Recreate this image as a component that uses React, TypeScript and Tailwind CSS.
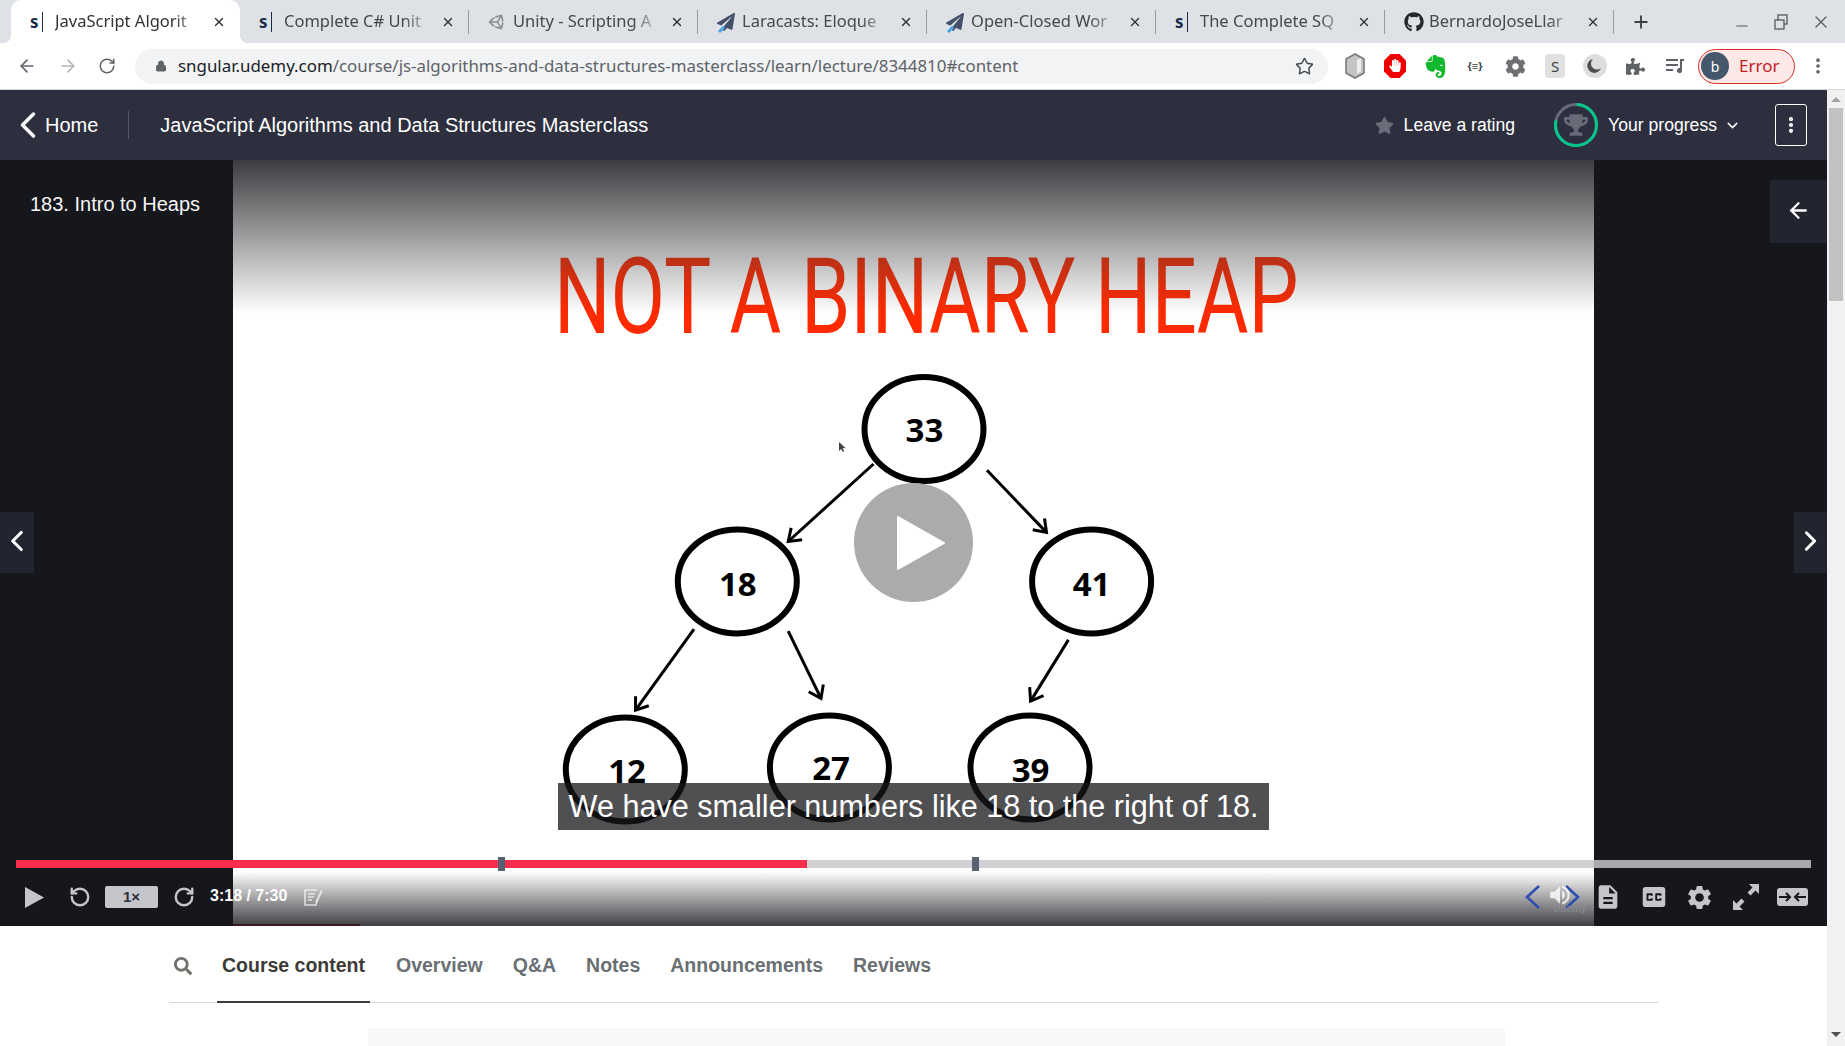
import React from 'react';
import { FaGithub, FaPaperPlane, FaStar, FaTrophy, FaHandPaper, FaCog, FaPuzzlePiece, FaSearch, FaUnity } from 'react-icons/fa';
import { SiEvernote } from 'react-icons/si';
import { MdClosedCaption, MdDescription, MdSettings, MdVolumeUp } from 'react-icons/md';
import { ArrowLeft, ArrowRight, ChevronDown, ChevronLeft, ChevronRight, Lock, Minus, MoreVertical, Plus, RotateCcw, RotateCw, Star, X } from 'lucide-react';

const UdemyFav = () => (
    <span className="flex items-center w-[16px] text-[#1c2b49] font-bold text-[17px] leading-none">
        s<span className="ml-[3px] h-[20px] w-[1px] bg-[#1c2b49]" />
    </span>
);

const Plane = () => (
    <span className="relative block w-[18px] h-[18px]">
        <FaPaperPlane className="w-[18px] h-[18px] text-[#44506a]" />
        <span className="absolute left-[1px] bottom-[0px] w-[7px] h-[3px] -rotate-45 bg-[#4aa3e8]" />
    </span>
);

const tabs = [
    { title: 'JavaScript Algorit', icon: <UdemyFav /> },
    { title: 'Complete C# Unit', icon: <UdemyFav /> },
    { title: 'Unity - Scripting A', icon: <FaUnity className="w-[18px] h-[18px] text-[#8b8d90]" /> },
    { title: 'Laracasts: Eloque', icon: <Plane /> },
    { title: 'Open-Closed Wor', icon: <Plane /> },
    { title: 'The Complete SQ', icon: <UdemyFav /> },
    { title: 'BernardoJoseLlar', icon: <FaGithub className="w-[20px] h-[20px] text-[#24292e]" /> },
];

const TabStrip = () => (
    <div className="flex h-[43px] shrink-0 items-stretch bg-[#dee1e6] pl-[11px] font-['Noto_Sans',sans-serif] text-[16.5px] text-[#45484d]">
        {tabs.map((tab, i) => (
            <div
                key={tab.title}
                className={`relative flex w-[229px] shrink-0 items-center pl-[19px] pr-[14px] ${i === 0 ? 'rounded-t-[10px] bg-white text-[#303236]' : ''}`}
            >
                <span className="flex w-[25px] shrink-0 items-center">{tab.icon}</span>
                <span className="min-w-0 flex-1 whitespace-nowrap [mask-image:linear-gradient(to_right,black_80%,transparent_100%)]">
                    {tab.title}
                </span>
                <X className="ml-[8px] h-[14px] w-[14px] shrink-0 text-[#303236]" strokeWidth={2.4} />
                {i !== 0 && <span className="absolute right-0 top-[10px] h-[24px] w-[1px] bg-[#9a9ca0]" />}
                {i === 0 && (
                    <>
                        <span className="absolute -left-[8px] bottom-0 h-[8px] w-[8px] bg-[radial-gradient(circle_at_0_0,transparent_8px,white_8px)]" />
                        <span className="absolute -right-[8px] bottom-0 h-[8px] w-[8px] bg-[radial-gradient(circle_at_100%_0,transparent_8px,white_8px)]" />
                    </>
                )}
            </div>
        ))}
        <div className="ml-[17px] flex items-center">
            <Plus className="h-[20px] w-[20px] text-[#3c3f43]" strokeWidth={2.2} />
        </div>
        <div className="ml-auto flex items-center gap-[21px] pr-[14px] text-[#55585c]">
            <Minus className="mt-[8px] h-[18px] w-[18px]" strokeWidth={1.6} />
            <svg width="18" height="18" viewBox="0 0 18 18" fill="none" stroke="currentColor" strokeWidth="1.3">
                <rect x="6" y="2" width="9" height="9" />
                <rect x="3" y="7" width="9" height="9" fill="#dee1e6" />
            </svg>
            <X className="h-[20px] w-[20px]" strokeWidth={1.5} />
        </div>
    </div>
);

const Toolbar = () => (
    <div className="flex h-[47px] shrink-0 items-center border-b border-[#d5d7da] bg-white font-['Noto_Sans',sans-serif]">
        <div className="flex w-[135px] shrink-0 items-center pl-[17px] text-[#5f6368]">
            <ArrowLeft className="h-[20px] w-[20px]" strokeWidth={2} />
            <ArrowRight className="ml-[21px] h-[20px] w-[20px] text-[#b4b7bb]" strokeWidth={2} />
            <RotateCw className="ml-[20px] h-[18px] w-[18px]" strokeWidth={2} />
        </div>
        <div className="flex h-[35px] w-[1193px] shrink-0 items-center rounded-full bg-[#f1f3f4] pl-[20px] pr-[14px] text-[16.9px]">
            <Lock className="h-[14px] w-[12px] shrink-0 text-[#5f6368]" fill="#5f6368" strokeWidth={2} />
            <span className="ml-[11px] flex-1 whitespace-nowrap text-[#5f6368]">
                <span className="text-[#202124]">sngular.udemy.com</span>/course/js-algorithms-and-data-structures-masterclass/learn/lecture/8344810#content
            </span>
            <Star className="h-[19px] w-[19px] shrink-0 text-[#45484c]" strokeWidth={1.8} />
        </div>
        <div className="ml-[7px] flex w-[360px] shrink-0 items-center">
            <span className="flex w-[40px] justify-center">
                <svg width="22" height="26" viewBox="0 0 22 26">
                    <path d="M11 1l9 5v14l-9 5-9-5V6z" fill="#c4c6c6" stroke="#77797b" strokeWidth="1.6" />
                    <path d="M13 7l4-2v13l-4 3z" fill="#eef0f0" />
                </svg>
            </span>
            <span className="relative flex w-[40px] justify-center">
                <svg width="22" height="24" viewBox="0 0 22 24">
                    <path d="M6.500 0h9L22 6.500v11L15.500 24h-9L0 17.500v-11z" fill="#ee0000" />
                </svg>
                <FaHandPaper className="absolute left-[14px] top-[5px] h-[13px] w-[12px] text-white" />
            </span>
            <span className="flex w-[40px] justify-center">
                <SiEvernote className="h-[23px] w-[23px] text-[#14b82e]" />
            </span>
            <span className="flex w-[40px] justify-center text-[11px] font-bold text-[#3c3f43]">{'{≡}'}</span>
            <span className="flex w-[40px] justify-center">
                <FaCog className="h-[21px] w-[21px] text-[#6d6f72]" />
            </span>
            <span className="flex w-[40px] justify-center">
                <span className="flex h-[24px] w-[20px] items-center justify-center rounded-[4px] bg-[#dfe0e0] text-[15px] text-[#3f4144]">S</span>
            </span>
            <span className="flex w-[40px] justify-center">
                <svg width="24" height="24" viewBox="0 0 24 24">
                    <circle cx="12" cy="12" r="12" fill="#dcdddd" />
                    <path d="M10 5a7 7 0 1 0 8 9 6 6 0 0 1-8-9z" fill="#4a4c50" />
                </svg>
            </span>
            <span className="flex w-[40px] justify-center">
                <FaPuzzlePiece className="h-[19px] w-[19px] text-[#5f6368]" />
            </span>
            <span className="flex w-[40px] justify-center">
                <svg width="20" height="18" viewBox="0 0 20 18" fill="#5f6368">
                    <rect x="1" y="2" width="12" height="2" />
                    <rect x="1" y="7" width="12" height="2" />
                    <rect x="1" y="12" width="7" height="2" />
                    <path d="M15 2h4v2h-2v9.5a2.5 2.5 0 1 1-2-2.4z" />
                </svg>
            </span>
        </div>
        <div className="ml-[3px] flex h-[35px] w-[97px] shrink-0 items-center rounded-full border border-[#d93025] bg-[#fce8e6] pl-[2px]">
            <span className="flex h-[28px] w-[28px] items-center justify-center rounded-full bg-[#45586b] text-[14px] text-white">b</span>
            <span className="ml-[10px] text-[17px] text-[#c5221f]">Error</span>
        </div>
        <MoreVertical className="ml-[13px] h-[20px] w-[20px] text-[#5f6368]" strokeWidth={2.4} />
    </div>
);

const CourseHeader = () => (
    <div className="flex h-[70px] shrink-0 items-center bg-[#2d2f3e] font-['Liberation_Sans',sans-serif] text-white">
        <ChevronLeft className="ml-[6px] h-[44px] w-[44px] shrink-0" strokeWidth={1.9} />
        <span className="-ml-[5px] text-[20px]">Home</span>
        <span className="ml-[30px] h-[28px] w-[1px] bg-[#555766]" />
        <span className="ml-[31px] text-[20px]">JavaScript Algorithms and Data Structures Masterclass</span>
        <div className="ml-auto flex items-center pr-[20px]">
            <FaStar className="h-[19px] w-[19px] text-[#6a6c79]" />
            <span className="ml-[10px] text-[17.6px]">Leave a rating</span>
            <span className="relative ml-[39px] flex h-[44px] w-[44px] items-center justify-center">
                <svg width="44" height="44" viewBox="0 0 44 44" className="absolute inset-0">
                    <circle cx="22" cy="22" r="20.5" fill="none" stroke="#686a78" strokeWidth="3" />
                    <circle cx="22" cy="22" r="20.5" fill="none" stroke="#00c68a" strokeWidth="3" strokeDasharray="100 129" transform="rotate(-88 22 22)" />
                </svg>
                <FaTrophy className="h-[22px] w-[24px] text-[#686a78]" />
            </span>
            <span className="ml-[10px] text-[17.6px]">Your progress</span>
            <ChevronDown className="ml-[7px] h-[17px] w-[17px]" strokeWidth={2} />
            <span className="ml-[34px] flex h-[42px] w-[32px] items-center justify-center rounded-[3px] border border-white">
                <MoreVertical className="h-[20px] w-[20px]" strokeWidth={3} />
            </span>
        </div>
    </div>
);

const nodes = [
    { cx: 924, cy: 429, lx: 924.4, ly: 430.4, label: '33' },
    { cx: 737.3, cy: 581.4, lx: 737.8, ly: 584.5, label: '18' },
    { cx: 1091.6, cy: 581.4, lx: 1091.6, ly: 584.5, label: '41' },
    { cx: 625.3, cy: 769.5, lx: 627, ly: 771.5, label: '12' },
    { cx: 829.4, cy: 767.5, lx: 831, ly: 768.7, label: '27' },
    { cx: 1030, cy: 767.5, lx: 1030.5, ly: 770.7, label: '39' },
];

const arrows = [
    [873.5, 464, 788.2, 541.5],
    [987, 470.3, 1046.5, 532.4],
    [694, 629.2, 635.5, 710.2],
    [788.2, 631.2, 821, 698.4],
    [1068.4, 639.9, 1030.6, 701.1],
];

// the slide drawn as one svg, coordinates are page pixels minus the video offset
const HeapDiagram = () => (
    <svg className="absolute left-0 top-0" width="1361" height="766" viewBox="233 160 1361 766">
        {arrows.map(([x1, y1, x2, y2]) => {
            const a = Math.atan2(y2 - y1, x2 - x1);
            const h = 14;
            const p1 = [x2 - h * Math.cos(a - 0.62), y2 - h * Math.sin(a - 0.62)];
            const p2 = [x2 - h * Math.cos(a + 0.62), y2 - h * Math.sin(a + 0.62)];
            return (
                <g key={x1} stroke="#000" strokeWidth="3" fill="none">
                    <line x1={x1} y1={y1} x2={x2} y2={y2} />
                    <polyline points={`${p1[0]},${p1[1]} ${x2},${y2} ${p2[0]},${p2[1]}`} />
                </g>
            );
        })}
        {nodes.map(n => (
            <g key={n.label}>
                <ellipse cx={n.cx} cy={n.cy} rx="59.5" ry="52" fill="#fff" stroke="#000" strokeWidth="6" />
                <text x={n.lx} y={n.ly + 11.5} textAnchor="middle" fontFamily="Open Sans, sans-serif" fontWeight="700" fontSize="33" fill="#000">
                    {n.label}
                </text>
            </g>
        ))}
        <path d="M839 442l0 9 2.2-2 1.6 3 1.4-.7-1.5-3 2.8-.3z" fill="#444" />
    </svg>
);

const VideoControls = () => (
    <div className="absolute inset-x-0 bottom-0 h-[66px] font-['Liberation_Sans',sans-serif] text-[#c5c6cb]">
        <div className="relative ml-[16px] h-[8px] w-[1795px] bg-[#c5c6cb]/[.84]">
            <div className="h-full w-[791px] bg-[#f92e4d]" />
            <span className="absolute left-[482px] -top-[3px] h-[14px] w-[7px] bg-[#56606f]" />
            <span className="absolute left-[956px] -top-[3px] h-[14px] w-[7px] bg-[#56606f]" />
        </div>
        <div className="mt-[13px] flex h-[32px] items-center pl-[25px] pr-[19px]">
            <svg width="19" height="21" viewBox="0 0 19 21" fill="currentColor" className="shrink-0">
                <path d="M0 0l19 10.5L0 21z" />
            </svg>
            <RotateCcw className="ml-[25px] h-[22px] w-[22px] shrink-0" strokeWidth={2.6} />
            <span className="ml-[14px] flex h-[22px] w-[53px] shrink-0 items-center justify-center rounded-[2px] bg-[#c5c6cb] text-[15px] font-bold text-[#2d2f3e]">
                1×
            </span>
            <RotateCw className="ml-[15px] h-[22px] w-[22px] shrink-0" strokeWidth={2.6} />
            <span className="ml-[15px] -mt-[2px] whitespace-nowrap text-[16px] font-bold text-white">3:18 / 7:30</span>
            <svg width="20" height="20" viewBox="0 0 20 20" fill="none" className="ml-[16px] shrink-0 text-white/70" stroke="currentColor" strokeWidth="1.6">
                <path d="M14 3H2v15h11l1-4M5 7h7M5 10h6M5 13h4" />
                <path d="M18 3l1.5 1-5 11-2 1 .3-2.500z" fill="currentColor" stroke="none" />
            </svg>
            <div className="ml-auto flex items-center">
                <span className="relative flex h-[32px] w-[55px] items-center justify-center">
                    <svg width="56" height="26" viewBox="0 0 56 26" fill="none" stroke="#2d4db0" strokeWidth="2.6" className="absolute left-0 top-[3px]">
                        <path d="M14 2L2 13l12 11" />
                        <path d="M41 2l12 11-12 11" />
                    </svg>
                    <MdVolumeUp className="absolute left-[22px] top-[1px] h-[26px] w-[26px] text-white/80" />
                    <span className="absolute left-[28px] top-[20px] text-[10px] font-bold text-[#8c8d90]/70">Udemy</span>
                </span>
                <MdDescription className="ml-[14px] h-[28px] w-[28px] shrink-0" />
                <MdClosedCaption className="ml-[17px] h-[30px] w-[30px] shrink-0" />
                <MdSettings className="ml-[16px] h-[29px] w-[29px] shrink-0" />
                <svg width="26" height="26" viewBox="0 0 26 26" fill="currentColor" className="ml-[19px] shrink-0">
                    <path d="M16 0h10v10l-3.500-3.500-5 5-3-3 5-5zM0 26V16l3.500 3.500 5-5 3 3-5 5L10 26z" />
                </svg>
                <span className="ml-[18px] flex h-[18px] w-[31px] shrink-0 items-center justify-center rounded-[3px] bg-[#c5c6cb]">
                    <svg width="27" height="12" viewBox="0 0 27 12" fill="none" stroke="#16171c" strokeWidth="2">
                        <path d="M0 6h11M7 2l4 4-4 4M27 6H16M20 2l-4 4 4 4" />
                    </svg>
                </span>
            </div>
        </div>
    </div>
);

const VideoPlayer = () => (
    <div className="relative flex h-[766px] shrink-0 bg-[#16171c] font-['Liberation_Sans',sans-serif]">
        <div className="w-[233px] shrink-0 pl-[30px] pt-[31px] text-[20px] leading-[26px] text-[#f5f5f5]">183. Intro to Heaps</div>
        <div className="relative w-[1361px] shrink-0 overflow-hidden bg-white">
            <HeapDiagram />
            <div className="absolute left-[321px] top-[76px] origin-left scale-x-[0.748] whitespace-nowrap font-['Roboto',sans-serif] text-[106px] font-normal leading-[122px] text-[#ff2a00]">
                NOT A BINARY HEAP
            </div>
            <div className="absolute inset-x-0 top-0 h-[153px] bg-gradient-to-b from-[#3c3c40] to-transparent" />
            <div className="absolute inset-x-0 bottom-0 h-[54px] bg-gradient-to-t from-[#404045] to-transparent" />
            <div className="absolute bottom-0 left-0 h-[2px] w-[127px] bg-[#3a1620]" />
            <div className="absolute left-[621px] top-[323px] flex h-[119px] w-[119px] items-center justify-center rounded-full bg-[#ababab]">
                <svg width="50" height="56" viewBox="0 0 50 56" className="ml-[14px]">
                    <path d="M2 2l46 26L2 54z" fill="#fff" stroke="#fff" strokeWidth="2" strokeLinejoin="round" />
                </svg>
            </div>
            <div className="absolute left-[325px] top-[623px] flex h-[47px] w-[711px] items-center justify-center whitespace-nowrap bg-[#15161a]/75 text-[30.6px] text-white">
                We have smaller numbers like 18 to the right of 18.
            </div>
        </div>
        <div className="flex-1" />
        <div className="absolute left-0 top-[352px] flex h-[61px] w-[34px] items-center justify-center bg-[#222530] text-white">
            <ChevronLeft className="-mt-[3px] h-[34px] w-[34px]" strokeWidth={2.2} />
        </div>
        <div className="absolute right-0 top-[352px] flex h-[61px] w-[33px] items-center justify-center bg-[#222530] text-white">
            <ChevronRight className="-mt-[3px] h-[34px] w-[34px]" strokeWidth={2.2} />
        </div>
        <div className="absolute right-0 top-[20px] flex h-[63px] w-[57px] items-center justify-center bg-[#222530] text-white">
            <ArrowLeft className="-mt-[2px] h-[25px] w-[25px]" strokeWidth={2.2} />
        </div>
        <VideoControls />
    </div>
);

const lectureTabs = ['Overview', 'Q&A', 'Notes', 'Announcements', 'Reviews'];

const LectureTabs = () => (
    <div className="flex flex-1 flex-col bg-white font-['Liberation_Sans',sans-serif]">
        <div className="ml-[169px] mr-[169px] flex h-[77px] shrink-0 items-center border-b border-[#dcdacb] pt-[3px] text-[19.5px] font-bold text-[#6a6f73]">
            <FaSearch className="ml-[5px] h-[18px] w-[18px] text-[#73726c]" />
            <div className="relative ml-[25px] flex h-full w-[153px] items-center justify-center text-[#3c3b37]">
                Course content
                <span className="absolute -bottom-[1px] left-0 h-[2px] w-full bg-[#3c3b37]" />
            </div>
            {lectureTabs.map((name, i) => (
                <span key={name} className={i === 0 ? 'ml-[26px]' : 'ml-[30px]'}>{name}</span>
            ))}
        </div>
        <div className="ml-[368px] mt-[25px] w-[1137px] flex-1 bg-[#f7f8fa]" />
    </div>
);

const Scrollbar = () => (
    <div className="flex w-[18px] shrink-0 flex-col items-center bg-[#f1f1f1]">
        <span className="mt-[7px] h-0 w-0 border-x-[5px] border-b-[5px] border-x-transparent border-b-[#a3a3a3]" />
        <span className="mt-[6px] h-[193px] w-[14px] bg-[#c1c1c1]" />
        <span className="mt-auto mb-[9px] h-0 w-0 border-x-[5px] border-t-[5px] border-x-transparent border-t-[#505050]" />
    </div>
);

export default function App() {
    return (
        <div className="flex h-[1046px] w-[1845px] flex-col overflow-hidden bg-white">
            <TabStrip />
            <Toolbar />
            <div className="flex min-h-0 flex-1">
                <div className="flex min-w-0 flex-1 flex-col">
                    <CourseHeader />
                    <VideoPlayer />
                    <LectureTabs />
                </div>
                <Scrollbar />
            </div>
        </div>
    );
}
